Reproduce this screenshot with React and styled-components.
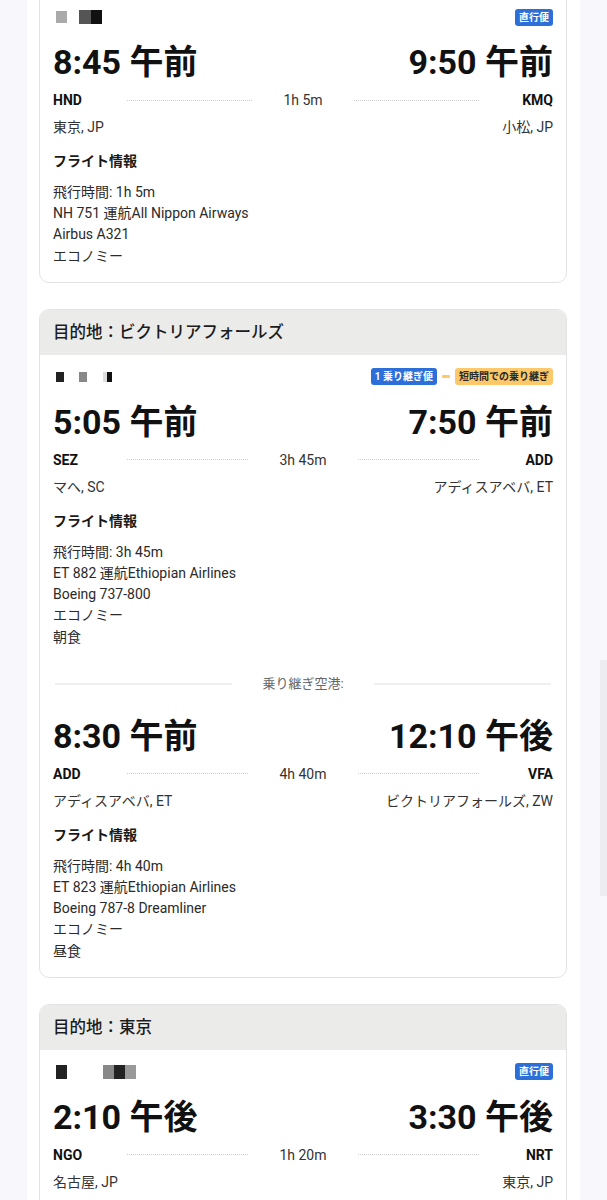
import React from 'react';
import styled, { createGlobalStyle } from 'styled-components';

const GlobalStyle = createGlobalStyle`
  html, body {
    margin: 0;
    padding: 0;
    background: #f8f8fc;
    font-family: Roboto, "Noto Sans CJK JP", sans-serif;
    color: #1a1a1a;
    overflow: hidden;
  }
`

const Page = styled.div`
  width: 607px;
  height: 1200px;
  overflow: hidden;
  position: relative;
`

const Column = styled.div`
  width: 553px;
  margin: -51px 0 0 27px;
  padding: 0 13px 40px 12px;
  box-sizing: border-box;
  background: #fff;
  display: flex;
  flex-direction: column;
  gap: 26px;
`

const Card = styled.section`
  border: 1px solid #e3e3e6;
  border-radius: 10px;
  overflow: hidden;
  background: #fff;
`

const Header = styled.h2`
  margin: 0;
  height: 45px;
  padding: 0 13px 3px;
  box-sizing: border-box;
  display: flex;
  align-items: center;
  background: #ebebea;
  font-size: 16.5px;
  font-weight: 500;
  color: #1c1c1c;
`

const Body = styled.div`
  padding: 13px 13px 15px;
`

const TopRow = styled.div`
  display: flex;
  align-items: center;
  justify-content: space-between;
  height: 18px;
`

const Logo = styled.div`
  display: flex;
  align-items: center;
  padding-left: 3px;
  filter: blur(0.6px);
`

const Blot = styled.span`
  display: block;
  width: ${p => p.w}px;
  height: ${p => p.h || 12}px;
  background: ${p => p.c};
  margin-left: ${p => p.ml || 0}px;
`

const Tags = styled.div`
  display: flex;
  align-items: center;
  gap: 5px;
`

const Tag = styled.span`
  font-size: 10px;
  font-weight: 700;
  line-height: 17px;
  padding: 0 4px;
  border-radius: 3px;
  background: ${p => (p.warn ? '#fcc86a' : '#2d6fd8')};
  color: ${p => (p.warn ? '#2a2a2a' : '#fff')};
`

const Dash = styled.span`
  width: 8px;
  height: 3px;
  border-radius: 1px;
  background: #fcc86a;
`

const Times = styled.div`
  display: flex;
  justify-content: space-between;
  margin-top: 15px;
  font-size: 34px;
  font-weight: 700;
  line-height: 42px;
  color: #111;
`

const Route = styled.div`
  display: grid;
  grid-template-columns: 74px 1fr auto 1fr 74px;
  align-items: center;
  margin-top: 8px;
  line-height: 18px;
  font-size: 14px;
`

const Code = styled.span`
  font-weight: 700;
  color: #111;
  text-align: ${p => (p.right ? 'right' : 'left')};
`

const Dots = styled.span`
  border-top: 1px dotted #cdcdcd;
  height: 0;
`

const Duration = styled.span`
  padding: 0 31px;
  color: #333;
`

const Cities = styled.div`
  display: flex;
  justify-content: space-between;
  margin-top: 9px;
  font-size: 14px;
  line-height: 18px;
  color: #333;
`

const InfoTitle = styled.h3`
  margin: 16px 0 0;
  font-size: 14px;
  font-weight: 700;
  line-height: 18px;
  color: #1a1a1a;
`

const InfoList = styled.ul`
  list-style: none;
  margin: 12px 0 0;
  padding: 0;
  font-size: 14px;
  line-height: 21.2px;
  color: #2a2a2a;
`

const Divider = styled.div`
  display: flex;
  align-items: center;
  gap: 30px;
  margin: 27px 2px 22px;
  font-size: 13px;
  line-height: 18px;
  color: #666;

  &::before, &::after {
    content: '';
    flex: 1;
    height: 2px;
    background: #efefef;
  }
`

const Scrollbar = styled.div`
  position: absolute;
  right: 0;
  top: 660px;
  width: 7px;
  height: 236px;
  background: #ececf1;
`

function Segment({ seg }) {
  return (
    <>
      <Times>
        <span>{seg.dep}</span>
        <span>{seg.arr}</span>
      </Times>
      <Route>
        <Code>{seg.from}</Code>
        <Dots />
        <Duration>{seg.duration}</Duration>
        <Dots />
        <Code right>{seg.to}</Code>
      </Route>
      <Cities>
        <span>{seg.fromCity}</span>
        <span>{seg.toCity}</span>
      </Cities>
      {seg.info && (
        <>
          <InfoTitle>フライト情報</InfoTitle>
          <InfoList>
            {seg.info.map(line => (
              <li key={line}>{line}</li>
            ))}
          </InfoList>
        </>
      )}
    </>
  )
}

const trips = [
  {
    title: '目的地：小松',
    logo: [
      { w: 11, c: '#aaa' },
      { w: 12, c: '#555', h: 14, ml: 12 },
      { w: 11, c: '#111', h: 14 },
    ],
    tags: [{ text: '直行便' }],
    segments: [
      {
        dep: '8:45 午前', arr: '9:50 午前', from: 'HND', to: 'KMQ', duration: '1h 5m',
        fromCity: '東京, JP', toCity: '小松, JP',
        info: ['飛行時間: 1h 5m', 'NH 751 運航All Nippon Airways', 'Airbus A321', 'エコノミー'],
      },
    ],
  },
  {
    title: '目的地：ビクトリアフォールズ',
    logo: [
      { w: 8, c: '#222', h: 10 },
      { w: 8, c: '#888', h: 10, ml: 15 },
      { w: 4, c: '#ddd', h: 10, ml: 16 },
      { w: 5, c: '#111', h: 10 },
    ],
    tags: [{ text: '1 乗り継ぎ便' }, { dash: true }, { text: '短時間での乗り継ぎ', warn: true }],
    segments: [
      {
        dep: '5:05 午前', arr: '7:50 午前', from: 'SEZ', to: 'ADD', duration: '3h 45m',
        fromCity: 'マへ, SC', toCity: 'アディスアベバ, ET',
        info: ['飛行時間: 3h 45m', 'ET 882 運航Ethiopian Airlines', 'Boeing 737-800', 'エコノミー', '朝食'],
      },
      {
        dep: '8:30 午前', arr: '12:10 午後', from: 'ADD', to: 'VFA', duration: '4h 40m',
        fromCity: 'アディスアベバ, ET', toCity: 'ビクトリアフォールズ, ZW',
        info: ['飛行時間: 4h 40m', 'ET 823 運航Ethiopian Airlines', 'Boeing 787-8 Dreamliner', 'エコノミー', '昼食'],
      },
    ],
  },
  {
    title: '目的地：東京',
    logo: [
      { w: 11, c: '#222', h: 14 },
      { w: 11, c: '#888', h: 14, ml: 36 },
      { w: 11, c: '#222', h: 14 },
      { w: 11, c: '#999', h: 14 },
    ],
    tags: [{ text: '直行便' }],
    segments: [
      {
        dep: '2:10 午後', arr: '3:30 午後', from: 'NGO', to: 'NRT', duration: '1h 20m',
        fromCity: '名古屋, JP', toCity: '東京, JP',
        info: ['飛行時間: 1h 20m', 'NH 3116 運航All Nippon Airways', 'Boeing 737-800', 'エコノミー'],
      },
    ],
  },
]

export default function App() {
  return (
    <Page>
      <GlobalStyle />
      <Column>
        {trips.map(trip => (
          <Card key={trip.title}>
            <Header>{trip.title}</Header>
            <Body>
              <TopRow>
                <Logo>
                  {trip.logo.map((b, i) => (
                    <Blot key={i} {...b} />
                  ))}
                </Logo>
                <Tags>
                  {trip.tags.map((t, i) =>
                    t.dash ? <Dash key={i} /> : <Tag key={i} warn={t.warn}>{t.text}</Tag>
                  )}
                </Tags>
              </TopRow>
              {trip.segments.map((seg, i) => (
                <React.Fragment key={seg.from + seg.to}>
                  {i > 0 && <Divider>乗り継ぎ空港:</Divider>}
                  <Segment seg={seg} />
                </React.Fragment>
              ))}
            </Body>
          </Card>
        ))}
      </Column>
      <Scrollbar />
    </Page>
  )
}
